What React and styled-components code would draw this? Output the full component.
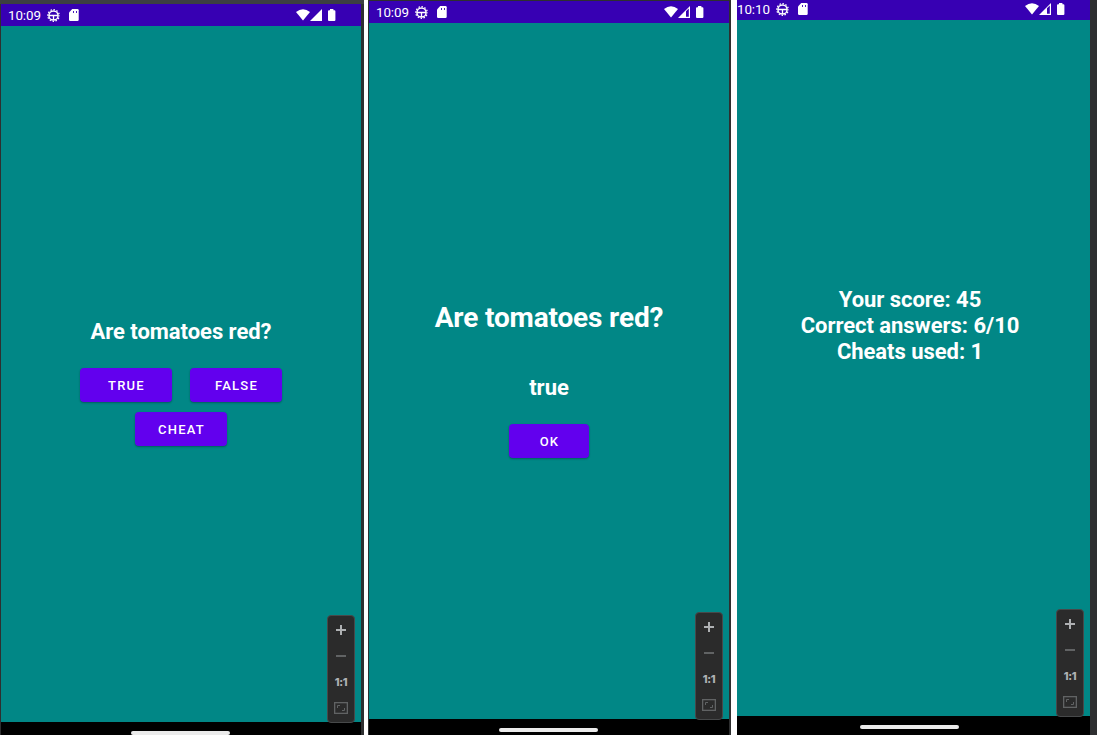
import React from 'react';
import styled, { createGlobalStyle } from 'styled-components';

const GlobalStyle = createGlobalStyle`
  * { box-sizing: border-box; }
  body { margin: 0; overflow: hidden; background: #fff; }
`;

const Board = styled.main`
  display: flex;
  width: 1097px;
  height: 735px;
  overflow: hidden;
  background: #fff;
  font-family: Roboto, 'Liberation Sans', sans-serif;
  color: #fff;
`;

const Emulator = styled.section`
  flex: none;
  width: ${p => p.$width}px;
  height: 735px;
  margin-right: ${p => p.$gap || 0}px;
  padding: ${p => p.$frame};
  overflow: hidden;
  background: linear-gradient(${p => p.$edge || '#2e2f30'} 0 4px, #2e2f30 4px);
`;

const Phone = styled.div`
  position: relative;
  display: flex;
  flex-direction: column;
  width: 360px;
  height: 750px;
  margin-left: ${p => p.$shiftX || 0}px;
  margin-top: ${p => p.$shiftY || 0}px;
  background: #000;
`;

const StatusBar = styled.header`
  flex: none;
  display: flex;
  align-items: center;
  height: 22px;
  padding: 0 25px 0 7px;
  background: #3700b3;
`;

const Clock = styled.time`
  width: 39px;
  padding-top: 1px;
  font-size: 13.4px;
  line-height: 22px;
  letter-spacing: -0.1px;
  white-space: nowrap;
`;

const StatusIcon = styled.svg`
  flex: none;
  display: block;
  margin-left: ${p => p.$left || 0}px;
`;

const Spacer = styled.span`
  flex: 1;
`;

const Screen = styled.div`
  flex: none;
  display: flex;
  flex-direction: column;
  align-items: center;
  height: 696px;
  padding-top: ${p => p.$top}px;
  background: #018786;
`;

const Heading = styled.h1`
  margin: 0;
  font-size: ${p => p.$size || 22}px;
  line-height: ${p => p.$line || 26}px;
  font-weight: 700;
  letter-spacing: ${p => p.$tracking || -0.04}px;
  text-align: center;
  white-space: nowrap;
`;

const ButtonRow = styled.div`
  display: flex;
  justify-content: center;
  gap: 18px;
  margin-top: ${p => p.$top}px;
`;

const Button = styled.button`
  width: ${p => p.$width || 92}px;
  height: 34px;
  padding: 1px 0 0 1px;
  border: 0;
  border-radius: 4px;
  background: #6200ee;
  box-shadow: 0 1px 2px rgba(0, 0, 0, 0.3);
  color: #fff;
  font: 500 13px/33px Roboto, 'Liberation Sans', sans-serif;
  letter-spacing: 1.2px;
  text-align: center;
`;

const NavBar = styled.footer`
  display: flex;
  justify-content: center;
  padding: 9px 2px 0 0;
`;

const Handle = styled.span`
  width: 99px;
  height: 4px;
  border-radius: 2px;
  background: #ebebeb;
`;

const ZoomPanel = styled.aside`
  position: absolute;
  left: 326px;
  top: 611px;
  display: flex;
  flex-direction: column;
  align-items: center;
  width: 28px;
  height: 108px;
  padding-top: 1px;
  border: 1px solid #47494a;
  border-radius: 4px;
  background: #2b2b2b;
`;

const ZoomItem = styled.span`
  display: flex;
  align-items: center;
  justify-content: center;
  width: 26px;
  height: 26px;
  color: #afb1b3;
  font: 800 11px/26px Inter, 'Liberation Sans', sans-serif;
  letter-spacing: -0.4px;
`;

function DebugIcon() {
  return (
    <StatusIcon width="13" height="13" viewBox="0 0 13 13" fill="none" stroke="#fff">
      <circle cx="6.5" cy="6.5" r="4.6" strokeWidth="1.5" />
      <circle cx="6.5" cy="6.5" r="5.8" strokeWidth="1.2" strokeDasharray="1.5 1.537" strokeDashoffset="0.75" />
      <path d="M2 6.5h9M6.5 6.5v4.5" strokeWidth="1.3" />
    </StatusIcon>
  );
}

function CardIcon() {
  return (
    <StatusIcon $left={9} width="10" height="12" viewBox="0 0 10 12">
      <path fill="#fff" d="M3.2 0H8.5Q9.7 0 9.7 1.2V10.8Q9.7 12 8.5 12H1.2Q0 12 0 10.8V3.4Z" />
      <path stroke="#3700b3" strokeWidth=".9" d="M4.5 2v2M7.5 2v2" />
    </StatusIcon>
  );
}

function WifiIcon() {
  return (
    <StatusIcon width="14" height="12" viewBox="0 0 14 12">
      <path fill="#fff" d="M0 3Q7-2.4 14 3L7 11.5Z" />
    </StatusIcon>
  );
}

function SignalIcon({ partial }) {
  return (
    <StatusIcon width="12" height="12" viewBox="0 0 12 12">
      <path fill="#fff" d="M0 12L12 0V12Z" />
      {partial && <path fill="#3700b3" d="M8 5.2L10.8 2.6V10.8H8Z" />}
    </StatusIcon>
  );
}

function BatteryIcon() {
  return (
    <StatusIcon $left={6} width="8" height="12" viewBox="0 0 8 12">
      <path fill="#fff" d="M2 0H5.4V1.2H6.4Q7.4 1.2 7.4 2.2V11Q7.4 12 6.4 12H1Q0 12 0 11V2.2Q0 1.2 1 1.2H2Z" />
    </StatusIcon>
  );
}

function ZoomControls() {
  return (
    <ZoomPanel>
      <ZoomItem>
        <svg width="10" height="10"><path d="M0 5h10M5 0v10" stroke="#afb1b3" strokeWidth="2" /></svg>
      </ZoomItem>
      <ZoomItem>
        <svg width="10" height="2"><path d="M0 1h10" stroke="#616364" strokeWidth="2" /></svg>
      </ZoomItem>
      <ZoomItem>1:1</ZoomItem>
      <ZoomItem>
        <svg width="14" height="12" fill="none" stroke="#616364">
          <rect x=".65" y=".65" width="12.7" height="10.7" strokeWidth="1.3" />
          <path d="M3.5 6V3.5H6M8 8.5h2.5V6" />
        </svg>
      </ZoomItem>
    </ZoomPanel>
  );
}

function Device({ time, partial, top, shiftX, shiftY, children }) {
  return (
    <Phone $shiftX={shiftX} $shiftY={shiftY}>
      <StatusBar>
        <Clock>{time}</Clock>
        <DebugIcon />
        <CardIcon />
        <Spacer />
        <WifiIcon />
        <SignalIcon partial={partial} />
        <BatteryIcon />
      </StatusBar>
      <Screen $top={top}>{children}</Screen>
      <NavBar><Handle /></NavBar>
      <ZoomControls />
    </Phone>
  );
}

export default function App() {
  return (
    <>
      <GlobalStyle />
      <Board>
        <Emulator $width={364} $gap={4} $frame="4px 3px 0 1px" $edge="#3c3f41">
          <Device time="10:09" top={293}>
            <Heading>Are tomatoes red?</Heading>
            <ButtonRow $top={23}>
              <Button>TRUE</Button>
              <Button>FALSE</Button>
            </ButtonRow>
            <ButtonRow $top={10}>
              <Button>CHEAT</Button>
            </ButtonRow>
          </Device>
        </Emulator>
        <Emulator $width={363} $gap={6} $frame="1px 2px 0 1px">
          <Device time="10:09" partial top={278}>
            <Heading $size={28} $line={33} $tracking={-0.15}>Are tomatoes red?</Heading>
            <ButtonRow $top={41}>
              <Heading as="p">true</Heading>
            </ButtonRow>
            <ButtonRow $top={23}>
              <Button $width={80}>OK</Button>
            </ButtonRow>
          </Device>
        </Emulator>
        <Emulator $width={360} $frame="0">
          <Device time="10:10" partial shiftX={-7} shiftY={-2} top={267}>
            <Heading>
              Your score: 45<br />Correct answers: 6/10<br />Cheats used: 1
            </Heading>
          </Device>
        </Emulator>
      </Board>
    </>
  );
}
